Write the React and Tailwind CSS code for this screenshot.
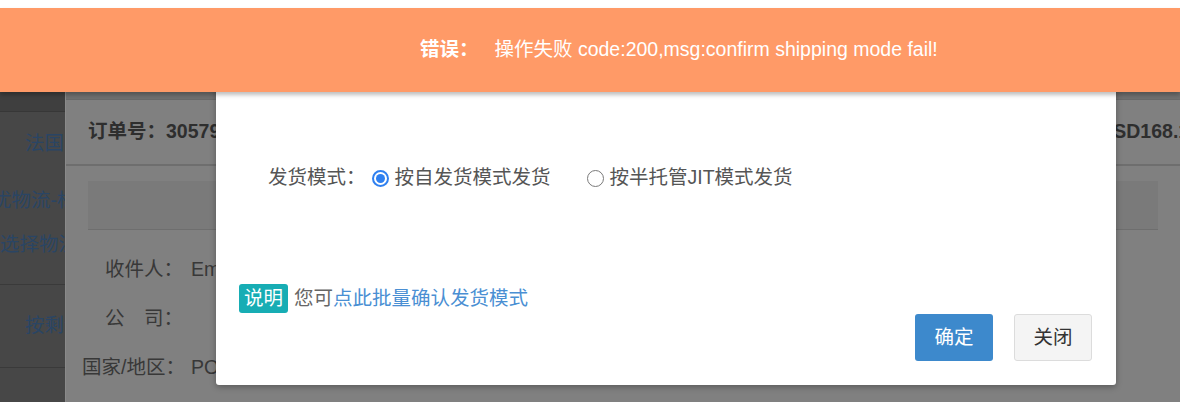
import React from 'react';

const FONT = "font-['Liberation_Sans','Noto_Sans_CJK_SC',sans-serif]";

const InfoRow = ({ label, value }) => (
  <div className="flex items-center h-[49px]">
    <span className="w-[101px] text-right text-[#383838] whitespace-nowrap">{label}</span>
    <span className="ml-[8px] text-[#383838]">{value}</span>
  </div>
);

const Radio = ({ checked, label }) => (
  <label className="flex items-center">
    {checked ? (
      <span className="w-[17px] h-[17px] rounded-full border-[2px] border-[#2f80f0] flex items-center justify-center">
        <span className="w-[9px] h-[9px] rounded-full bg-[#2f80f0]" />
      </span>
    ) : (
      <span className="w-[17px] h-[17px] rounded-full border-[1.5px] border-[#7a7a7a]" />
    )}
    <span className="ml-[6px] text-[#555]">{label}</span>
  </label>
);

export default function App() {
  return (
    <div className={`relative w-[1180px] h-[402px] overflow-hidden bg-white text-[19.5px] ${FONT}`}>
      <div className="h-[8px] bg-white" />

      {/* error toast */}
      <div className="relative z-20 h-[84px] bg-[#ff9a67] flex items-center pl-[420px] text-white shadow-[0_3px_4px_rgba(0,0,0,0.25)]">
        <span className="font-bold">错误：</span>
        <span className="ml-[16px]">操作失败 code:200,msg:confirm shipping mode fail!</span>
      </div>

      {/* dimmed page behind */}
      <div className="flex h-[310px]">
        <div className="w-[65px] shrink-0 bg-[#474747] overflow-hidden flex flex-col text-[#2a4564] whitespace-nowrap">
          <div className="h-[20px] bg-[#3f3f3f] border-b border-[#373737]" />
          <div className="flex-1 flex">
            <div className="w-[2px] bg-[#3b78d6] h-[128px]" />
            <div className="flex-1 flex flex-col">
              <div className="h-[63px] flex items-center pl-[25px]">法国邮政</div>
              <div className="h-[110px] flex flex-col pt-[11px] gap-[15px] border-b border-[#3a3a3a]">
                <div className="-ml-[8px]">优物流-标准</div>
                <div>选择物流</div>
              </div>
              <div className="h-[83px] flex items-center pl-[25px] border-b border-[#3a3a3a]">按剩余</div>
            </div>
          </div>
        </div>

        <div className="flex-1 bg-[#808080] border-l border-[#8a8a8a] flex flex-col">
          <div className="h-[8px] bg-[#707070] border-b border-[#6a6a6a]" />
          <div className="h-[66px] flex items-center pl-[22px] border-b-2 border-[#6e6e6e] whitespace-nowrap">
            <span className="font-bold text-[#2e2e2e]">订单号：305791234567890</span>
            <span className="ml-auto -mr-[20px] font-bold text-[#2e2e2e]">总额：USD168.18</span>
          </div>
          <div className="px-[22px] pt-[15px]">
            <div className="h-[49px] bg-[#7a7a7a] border-b border-[#6e6e6e]" />
            <div className="pt-[15px] -ml-[6px]">
              <InfoRow label="收件人：" value="Emma" />
              <InfoRow label="公　司：" value="" />
              <InfoRow label="国家/地区：" value="POLAND" />
            </div>
          </div>
        </div>
      </div>

      {/* modal */}
      <div className="absolute z-10 left-[216px] top-[60px] w-[900px] h-[325px] bg-white rounded-b-[3px] shadow-[0_2px_6px_rgba(0,0,0,0.3)] flex flex-col">
        <div className="flex items-center h-[24px] mt-[106px] pl-[52px]">
          <span className="text-[#555]">发货模式：</span>
          <div className="ml-[6px]">
            <Radio checked label="按自发货模式发货" />
          </div>
          <div className="ml-[36px]">
            <Radio label="按半托管JIT模式发货" />
          </div>
        </div>
        <div className="flex items-center h-[29px] mt-[94px] pl-[23px]">
          <span className="h-[29px] px-[5px] rounded-[3px] bg-[#17adb4] text-white flex items-center">说明</span>
          <span className="ml-[6px] text-[#666]">您可</span>
          <a className="text-[#4a8fd3] cursor-pointer">点此批量确认发货模式</a>
        </div>
        <div className="flex justify-end gap-[21px] pr-[24px] mt-[1px]">
          <button className="w-[78px] h-[47px] rounded-[3px] bg-[#3d89cc] text-white">确定</button>
          <button className="w-[78px] h-[47px] rounded-[3px] bg-[#f4f4f4] border border-[#dcdcdc] text-[#333]">关闭</button>
        </div>
      </div>
    </div>
  );
}
